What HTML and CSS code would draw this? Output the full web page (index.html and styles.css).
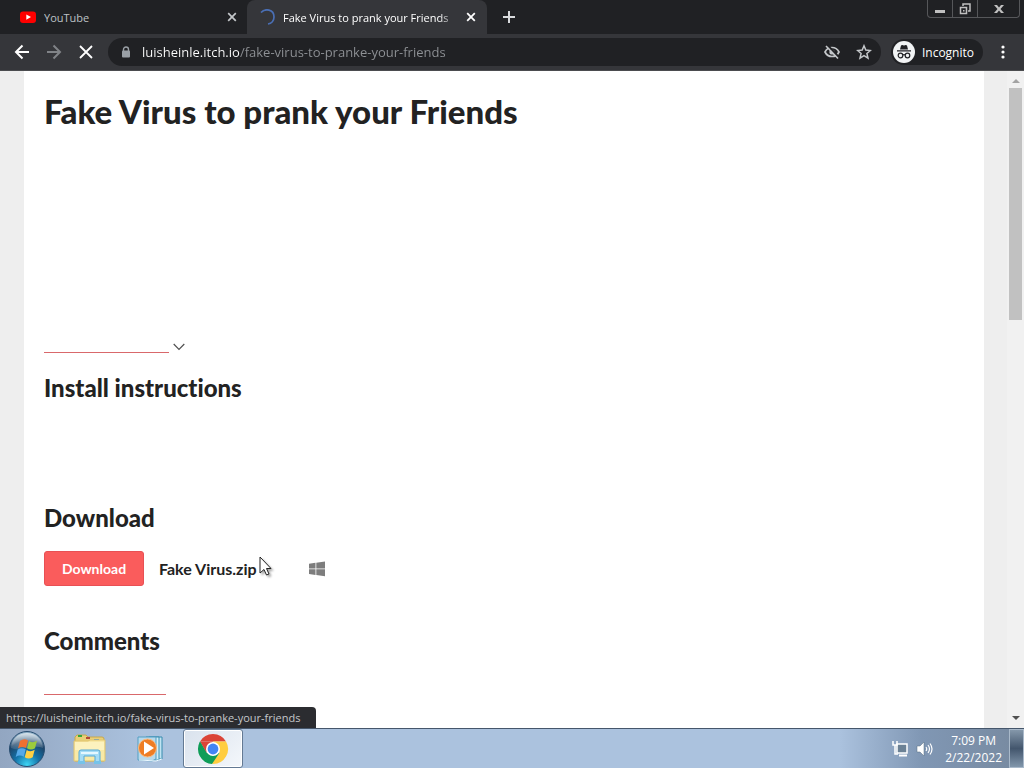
FILE: index.html
```html
<!DOCTYPE html>
<html lang="en">
<head>
<meta charset="utf-8">
<title>Fake Virus to prank your Friends</title>
<link rel="stylesheet" href="styles.css">
</head>
<body>
<header class="browser">
  <div class="tabstrip">
    <div class="tab">
      <svg class="favicon" width="16" height="16" viewBox="0 0 16 16"><rect x="0" y="2.500" width="16" height="11.500" rx="3" fill="#f00"/><path d="M6.300 5.500v5.200L11 8.100z" fill="#fff"/></svg>
      <a class="tab-title" href="#youtube">YouTube</a>
      <button class="icon-btn close" aria-label="Close YouTube tab"><svg width="10" height="10" viewBox="0 0 10 10"><path d="M1.200 1.200l7.600 7.600M8.800 1.200L1.200 8.800" stroke="#c4c7ca" stroke-width="1.700"/></svg></button>
    </div>
    <div class="tab active">
      <svg class="favicon" width="16" height="16" viewBox="0 0 16 16"><path d="M2 3.500C6-.8 15-.2 15 8c0 3.500-2.500 6.500-6 7" fill="none" stroke="#4a6fb5" stroke-width="1.700"/></svg>
      <a class="tab-title" href="#game">Fake Virus to prank your Friends</a>
      <button class="icon-btn close" aria-label="Close game tab"><svg width="10" height="10" viewBox="0 0 10 10"><path d="M1.200 1.200l7.600 7.600M8.800 1.200L1.200 8.800" stroke="#fff" stroke-width="1.800"/></svg></button>
    </div>
    <button class="icon-btn newtab" aria-label="New tab"><svg width="14" height="14" viewBox="0 0 14 14"><path d="M7 1v12M1 7h12" stroke="#d8dadd" stroke-width="2"/></svg></button>
    <div class="window-controls">
      <button class="win-btn" aria-label="Minimize"><svg width="12" height="12" viewBox="0 0 12 12"><path d="M1 7h10v3H1z" fill="#c0c0c0"/></svg></button>
      <button class="win-btn" aria-label="Restore"><svg width="12" height="12" viewBox="0 0 12 12"><path d="M4 3V1h7v7H9M1.500 4.500h6v6h-6z" fill="none" stroke="#c0c0c0" stroke-width="1.500"/><path d="M4 7h1.500v1.500H4z" fill="#c0c0c0"/></svg></button>
      <button class="win-btn win-close" aria-label="Close window"><svg width="12" height="12" viewBox="0 0 12 12"><path d="M1 2h3l2 2.500L8 2h3L7.500 6 11 10H8L6 7.500 4 10H1l3.500-4z" fill="#c0c0c0"/></svg></button>
    </div>
  </div>
  <div class="toolbar">
    <button class="icon-btn nav" aria-label="Back"><svg width="16" height="16" viewBox="0 0 16 16"><path d="M8.500 1.500L2 8l6.500 6.500M2 8h13" fill="none" stroke="#fff" stroke-width="2"/></svg></button>
    <button class="icon-btn nav" aria-label="Forward"><svg width="16" height="16" viewBox="0 0 16 16"><path d="M7.500 1.500L14 8l-6.500 6.500M14 8H1" fill="none" stroke="#808387" stroke-width="2"/></svg></button>
    <button class="icon-btn nav" aria-label="Stop loading"><svg width="16" height="16" viewBox="0 0 16 16"><path d="M2 2l12 12M14 2L2 14" stroke="#fff" stroke-width="1.800"/></svg></button>
    <div class="omnibox">
      <svg width="10" height="12" viewBox="0 0 10 12"><path d="M2.500 6V3.500a2.500 2.500 0 015 0V6" fill="none" stroke="#9aa0a6" stroke-width="1.400"/><rect x="1" y="4.500" width="8" height="7" rx="1" fill="#9aa0a6"/></svg>
      <input class="url" type="text" aria-label="Address" value="luisheinle.itch.io/fake-virus-to-pranke-your-friends">
      <button class="icon-btn tool" aria-label="Third-party cookies blocked"><svg width="16" height="16" viewBox="0 0 16 16"><path d="M1 8c3-6 11-6 14 0-3 6-11 6-14 0z" fill="none" stroke="#c4c7ca" stroke-width="1.700"/><circle cx="8" cy="8" r="2.600" fill="#c4c7ca"/><path d="M3.500 1.200l11 11.500" stroke="#202124" stroke-width="2"/><path d="M2 2l12 12.500" stroke="#c4c7ca" stroke-width="1.600"/></svg></button>
      <button class="icon-btn tool" aria-label="Bookmark this page"><svg width="16" height="16" viewBox="0 0 16 16"><path d="M8 1.800l1.800 4.300 4.600.4-3.500 3 1.100 4.600L8 11.700l-4 2.400 1.100-4.600-3.500-3 4.600-.4z" fill="none" stroke="#c4c7ca" stroke-width="1.500"/></svg></button>
    </div>
    <button class="incognito"><svg width="22" height="22" viewBox="0 0 22 22"><circle cx="11" cy="11" r="11" fill="#f1f3f4"/><path d="M7 8.500l1-4 1.200-.5 1.800.6 1.800-.6 1.200.5 1 4zM4 9.200h14v1.200H4z" fill="#202124"/><g fill="none" stroke="#202124" stroke-width="1.200"><circle cx="7.500" cy="14.500" r="2.300"/><circle cx="14.500" cy="14.500" r="2.300"/><path d="M9.800 14q1.200-.7 2.400 0"/></g></svg>Incognito</button>
    <button class="icon-btn menu" aria-label="Browser menu"><svg width="4" height="14" viewBox="0 0 4 14"><g fill="#fff"><circle cx="2" cy="2" r="1.600"/><circle cx="2" cy="7" r="1.600"/><circle cx="2" cy="12" r="1.600"/></g></svg></button>
  </div>
</header>

<div class="viewport">
  <main class="page">
    <h1 class="title">Fake Virus to prank your Friends</h1>
    <div class="more-row">
      <a class="blank-link more" href="#more" aria-label="More information"></a>
      <svg width="12" height="8" viewBox="0 0 12 8"><path d="M.7 1L6 6.300 11.300 1" fill="none" stroke="#505050" stroke-width="1.200"/></svg>
    </div>
    <h2 class="section install">Install instructions</h2>
    <h2 class="section">Download</h2>
    <div class="upload">
      <button class="download-btn">Download</button>
      <strong class="file">Fake Virus.zip</strong>
      <svg class="platform" width="16" height="16" viewBox="0 0 16 16"><path d="M0 2.800l6.500-1v5.700H0zM7.300 1.700L16 .5v7H7.300zM0 8.300h6.500V14L0 13zM7.300 8.300H16v7l-8.700-1.200z" fill="#7d7d7d"/></svg>
    </div>
    <h2 class="section">Comments</h2>
    <a class="blank-link login" href="#login" aria-label="Log in to comment"></a>
  </main>
  <div class="scrollbar" aria-hidden="true">
    <svg width="8" height="5" viewBox="0 0 8 5"><path d="M0 5l4-4 4 4z" fill="#a3a3a3"/></svg>
    <div class="track"><div class="thumb"></div></div>
    <svg width="8" height="5" viewBox="0 0 8 5"><path d="M0 0l4 4 4-4z" fill="#505050"/></svg>
  </div>
  <div class="status">https://luisheinle.itch.io/fake-virus-to-pranke-your-friends</div>
</div>

<footer class="taskbar">
  <button class="task start" aria-label="Start"><svg width="38" height="38" viewBox="0 0 38 38">
    <defs><radialGradient id="orb" cx=".5" cy=".95" r=".9"><stop offset="0" stop-color="#3ed5f4"/><stop offset=".4" stop-color="#1472a8"/><stop offset=".75" stop-color="#1d4468"/><stop offset="1" stop-color="#8fb0c8"/></radialGradient><linearGradient id="shine" x2="0" y2="1"><stop stop-color="#fff" stop-opacity=".65"/><stop offset="1" stop-color="#fff" stop-opacity=".1"/></linearGradient></defs>
    <circle cx="19" cy="19" r="17.500" fill="url(#orb)" stroke="#284d70"/><path d="M3 18C4-2 34-2 35 18c-10-4-22 4-32 0z" fill="url(#shine)"/>
    <path d="M12 11q4-3 8-.5l-2 7.500q-4-2-8 .5z" fill="#f07030"/><path d="M21 11q4 2.500 8-.3l-2 7.600q-4 2.500-8 0z" fill="#9bcc3c"/><path d="M9.700 19.500q4-2.500 8-.3l-2 7.500q-4-2.500-8 .3z" fill="#55a9e8"/><path d="M18.700 20q4 2.500 8-.3l-2 7.600q-4 2.500-8 0z" fill="#ffd044"/></svg></button>
  <button class="task" aria-label="File Explorer"><svg width="34" height="32" viewBox="0 0 34 32">
    <path d="M2 4l2-2h9l2 2h14q2 0 2 2v22H2z" fill="#e9cf78" stroke="#c7a84e"/><path d="M5 2h4v2H5z" fill="#36a838"/><path d="M13 4h4v2h-4z" fill="#b44835"/><path d="M21 6h5v2h-5z" fill="#4a8fd2"/><path d="M1 8h14l2-1h15v21H1z" fill="#f8e9a6" stroke="#dfc46e"/><path d="M2 9h29v8H2z" fill="#fff8cf" opacity=".6"/>
    <path d="M6 29V19q0-2 2-2h17q2 0 2 2v10h-5v-6H11v6z" fill="#a5dcf5" stroke="#54a8d5"/><path d="M8 19h17v2H8z" fill="#e4f7ff"/><path d="M5 28h7v3H5zM21 28h7v3h-7z" fill="#76c3e9"/></svg></button>
  <button class="task" aria-label="Media Player"><svg width="30" height="28" viewBox="0 0 30 28">
    <path d="M13 2h13v22H13z" fill="#c1e4f2" stroke="#368bae"/><path d="M10 2h13v23H10z" fill="#d2edf7" stroke="#398fb3"/><path d="M2 2h18v22l-4 2-14-1z" fill="#b8d9eb" stroke="#529fc3"/><path d="M3 25l17 1 6-2" fill="none" stroke="#eef9ff"/><circle cx="11.500" cy="13" r="9" fill="#ee7d24" stroke="#f9ba7f"/><path d="M8 6.500v13L18 13z" fill="#fff"/></svg></button>
  <button class="task running" aria-label="Google Chrome"><svg width="32" height="32" viewBox="0 0 32 32"><path d="M3 8.500A15 15 0 0129 8.500H16z" fill="#db4437"/><path d="M29 8.500A15 15 0 0116 31l-2-1 8.500-10.300L16 8.500z" fill="#ffcd40"/><path d="M3 8.500A15 15 0 0015 31l7.500-11.300-13 0z" fill="#0f9d58"/><path d="M3 8.500l6.500 11.200L16 8.500z" fill="#db4437"/><path d="M3 8.500l6.500 11.200L13 22l-6 3A15 15 0 013 8.500z" fill="#0f9d58"/><circle cx="16" cy="16" r="7" fill="#fff"/><circle cx="16" cy="16" r="5.400" fill="#4285f4"/></svg></button>
  <div class="tray">
    <svg width="17" height="16" viewBox="0 0 17 16"><path d="M5 3h10v9H5z" fill="#6b8195" stroke="#fff" stroke-width="1.500"/><path d="M7 14.500h8" stroke="#fff" stroke-width="2"/><path d="M1 0v4h4V0M3 4v9h3" fill="none" stroke="#fff" stroke-width="1.500"/></svg>
    <svg width="17" height="16" viewBox="0 0 17 16"><path d="M1 5h3l4-4v14l-4-4H1z" fill="#fff" stroke="#566c80" stroke-width=".5"/><path d="M10 6q1.500 2 0 4M12 4q3 4 0 8M14 2.500q4 5.500 0 11" fill="none" stroke="#fff" stroke-width="1.200"/></svg>
    <div class="clock"><span>7:09 PM</span><span>2/22/2022</span></div>
    <button class="show-desktop" aria-label="Show desktop"></button>
  </div>
</footer>
<svg class="cursor" width="14" height="21" viewBox="0 0 14 21"><path d="M1 1v16l4-3.500L7.500 19l2.500-1-2.500-5.500H12z" fill="#fff" stroke="#222"/></svg>
</body>
</html>
```
FILE: styles.css
```css
* { box-sizing: border-box; }
body { margin: 0; height: 100vh; display: flex; flex-direction: column; overflow: hidden; font-family: "Open Sans", "Noto Sans", sans-serif; font-size: 12px; }
button { border: 0; padding: 0; background: none; font: inherit; color: inherit; }
svg { display: block; flex: none; }
a { color: inherit; text-decoration: none; }

.browser { flex: none; color: #fff; background: #35363a; }
.tabstrip { display: flex; height: 34px; background: #202124; }
.tab { display: flex; align-items: center; width: 247px; padding: 0 9px 0 20px; gap: 8px; color: #bdc1c6; }
.tab.active { width: 240px; padding: 0 10px 0 12px; color: #fff; background: #35363a; border-radius: 8px 8px 0 0; }
.tab-title { flex: 1; min-width: 0; overflow: hidden; white-space: nowrap; font-size: 11px; }
.active .tab-title { -webkit-mask-image: linear-gradient(90deg, #000 90%, transparent); mask-image: linear-gradient(90deg, #000 90%, transparent); }
.icon-btn { display: flex; align-items: center; justify-content: center; flex: none; }
.close { width: 12px; height: 16px; }
.newtab { width: 44px; }
.window-controls { display: flex; height: 18px; margin-left: auto; margin-right: 4px; border: 1px solid #56575a; border-top: 0; border-radius: 0 0 4px 4px; }
.win-btn { width: 25px; display: flex; align-items: center; justify-content: center; border-right: 1px solid #56575a; }
.win-close { width: 41px; border-right: 0; }

.toolbar { display: flex; align-items: center; height: 37px; padding: 0 8px 0 6px; border-bottom: 1px solid #4b4c4f; }
.nav { width: 32px; height: 28px; }
.omnibox { flex: 1; display: flex; align-items: center; height: 28px; margin-left: 6px; padding: 0 5px 0 13px; gap: 8px; border-radius: 14px; background: #202124; }
.url { flex: 1; min-width: 0; margin-left: 3px; padding: 0; border: 0; outline: 0; font: 13px "Open Sans", "Noto Sans", sans-serif; color: transparent; background: linear-gradient(90deg, #fff 98px, #8f9296 98px); -webkit-background-clip: text; background-clip: text; }
.tool { width: 24px; height: 24px; }
.incognito { display: flex; align-items: center; gap: 7px; height: 26px; margin-left: 10px; padding: 0 9px 0 2px; border-radius: 13px; background: #202124; }
.menu { width: 26px; height: 28px; margin-left: 7px; }

.viewport { flex: 1; min-height: 0; display: flex; position: relative; background: #eee; }
.page { flex: 1; min-width: 0; margin: 0 23px 0 24px; padding: 20px; overflow: hidden; background: #fff; color: #222; font-family: Lato, sans-serif; font-variant-ligatures: none; }
.title { margin: 0 0 204px; font-size: 33px; line-height: 40px; font-weight: 900; }
.more-row { display: flex; align-items: center; height: 24px; gap: 4px; margin-bottom: 15px; }
.blank-link { display: block; border-bottom: 1px solid #d9686b; }
.more { width: 125px; height: 12px; }
.section { margin: 0 0 19px; font-size: 24px; line-height: 28px; font-weight: 900; }
.install { margin-bottom: 102px; }
.upload { display: flex; align-items: center; margin-bottom: 41px; }
.download-btn { width: 100px; height: 35px; border: 1px solid #e85054; border-radius: 3px; background: #fa5c5c; color: #fff; font-size: 14px; font-weight: 700; }
.file { margin-left: 15px; font-size: 16px; font-weight: 700; }
.platform { margin-left: 52px; }
.login { width: 122px; height: 21px; }

.scrollbar { display: flex; flex-direction: column; align-items: center; width: 17px; padding: 7px 2px; background: #f1f1f1; }
.track { flex: 1; align-self: stretch; padding-top: 5px; }
.thumb { height: 37%; background: #c1c1c1; }
.status { position: absolute; left: 0; bottom: 0; padding: 0 16px 0 6px; font-size: 11px; line-height: 21px; color: #c4c7ca; background: #2b2c30; border-top-right-radius: 4px; }

.taskbar { flex: none; display: flex; height: 40px; border-top: 1px solid #45566b; background: linear-gradient(90deg, #92a6c1, #abc2de 14%, #abc2de 82%, #8097b4 90%, #77899f); }
.task { display: flex; align-items: center; justify-content: center; width: 61px; }
.start { width: 59px; padding-right: 5px; }
.running { width: 60px; margin-left: 2px; border: 1px solid #637993; border-radius: 3px; background: linear-gradient(135deg, #d9e2ed, #f4f7fb); box-shadow: inset 0 0 0 1px #fff; }
.tray { display: flex; align-items: center; gap: 7px; margin-left: auto; color: #fff; }
.clock { display: flex; flex-direction: column; align-items: center; margin-left: 5px; line-height: 17px; }
.show-desktop { align-self: stretch; width: 15px; border: 1px solid #a9b9ca; background: linear-gradient(#8497aa, #43566d 50%, #8196ab); }
.cursor { position: absolute; left: 259px; top: 556px; filter: drop-shadow(2px 2px 1px #0005); }
```
